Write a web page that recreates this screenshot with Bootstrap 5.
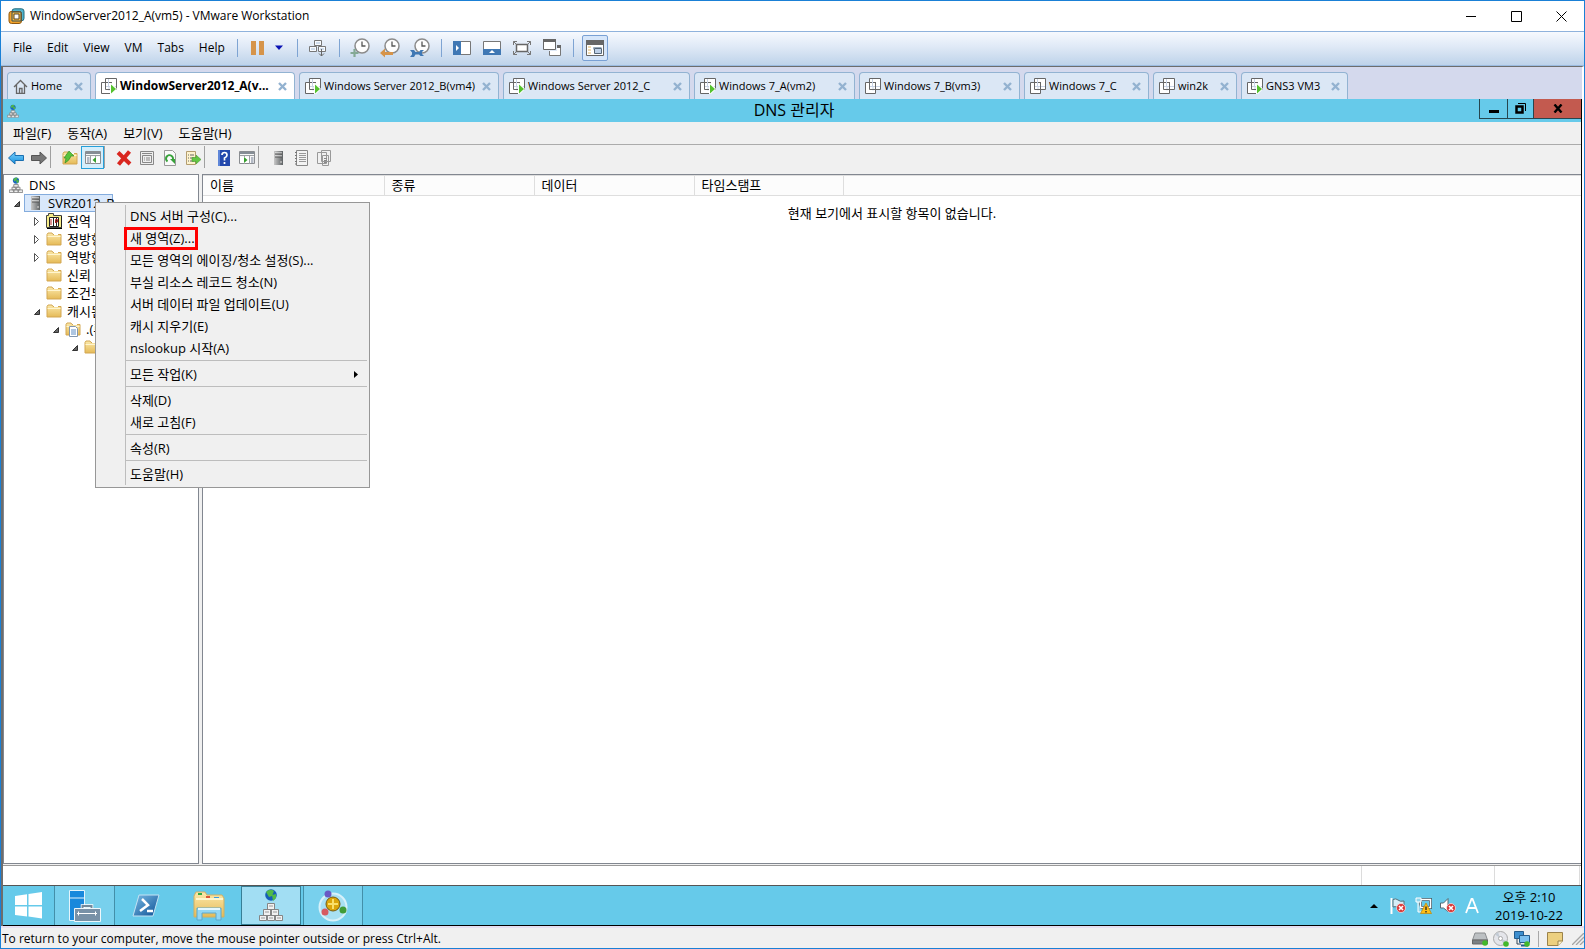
<!DOCTYPE html>
<html lang="ko">
<head>
<meta charset="utf-8">
<meta name="viewport" content="width=device-width, initial-scale=1">
<title>WindowServer2012_A(vm5) - VMware Workstation</title>
<link href="https://cdn.jsdelivr.net/npm/bootstrap@5.3.0/dist/css/bootstrap.min.css" rel="stylesheet">
<style>
body{font-family:"Open Sans","Noto Sans CJK KR",sans-serif;font-size:12px;line-height:18px;color:#000;background:#f0f0f0}
button{background:none;border:0;padding:0;color:inherit;font:inherit;display:flex;align-items:center;justify-content:center}
svg{display:block;flex:none}
.frame{height:100vh;border:1px solid #1a80d6}
.host-title{height:30px;background:#fff}
.host-title .app-icon{margin:0 5px 0 7px}
.host-title button{width:45px;height:28px}
.host-bar{height:35px;border-top:1px solid #8fb2dc;border-bottom:1px solid #9bbbe0;background:linear-gradient(#f6f9fe,#dfe9f6 45%,#bed3ea);padding:0 0 2px 5px}
.host-bar .menu-btn{padding:0 8px 0 7px;height:24px}
.host-bar .tool{width:30px;height:26px}
.host-bar .drop{width:12px;height:26px;margin-right:6px}
.host-bar .first{margin-left:5px}
.host-bar .vsep{width:1px;height:18px;background:#7ea4d3;margin-left:6px}
.host-bar .pressed{width:26px;border:1px solid #79a0d4;border-radius:2px;background:#d6e6fa;margin-left:8px}
.guest{border:solid #6d6d6d;border-width:1px 0 0 2px;border-right:2px solid #fff}
.tabs{height:32px;background:#d4d9ed;padding:5px 0 0 4px;gap:4px}
.vtab{height:27px;border:1px solid #92b3d2;border-bottom:0;border-radius:4px 4px 0 0;background:#dbe7f5;padding:0 4px 0 5px;font-size:11px;gap:3px;white-space:nowrap}
.vtab.on{background:#fff;font-weight:700;font-size:12px}
.vtab button{width:15px;height:18px}
.t-s{width:84px}.t-l{width:200px}.t-ml{width:187px}.t-m{width:161px}.t-ms{width:125px}.t-g{width:107px}
.desk{border-right:1px solid #000;border-bottom:1px solid #000;background:#f0f0f0;font-size:13px}
.mmc-title{height:23px;background:#66caea}
.mmc-title .cap{font-size:16px;line-height:22px}
.mmc-title .caps button{height:20px;border:solid #26464f;border-width:0 0 1px 1px}
.cap-a{width:28px}.cap-b{width:26px}.caps .cap-x{width:48px;background:#c35a4f;border-right-width:1px}
.mmc-menu{height:23px;border-bottom:1px solid #ababab;padding:0 2px}
.mmc-menu button{padding:0 8px;height:22px}
.mmc-tools{height:29px;padding:1px 0 0 1px}
.mmc-tools button{width:23px;height:23px}
.mmc-tools .pressed{border:1px solid #26a0da;background:#d5eefb}
.mmc-tools .gsep{width:8px;height:22px;border-left:1px solid #a0a0a0}
.panes{gap:3px}
.tree{width:196px;border:1px solid #828790;background:#fff;padding-top:1px}
.tree .node{height:18px;gap:5px;white-space:nowrap}
.tree .lv1{padding-left:8px}.tree .lv2{padding-left:28px}.tree .lv3{padding-left:47px}.tree .lv4{padding-left:66px}
.tree .twist{width:9px;height:9px}
.node .pick{height:18px;width:89px;margin-left:-2px;border:1px solid #84acdd;background:#d9e8fb;gap:6px;padding-left:3px}
.ctx{position:absolute;left:91px;top:8px;z-index:5;width:275px;padding:2px;border:1px solid #979797;background:#f0f0f0}
.ctx .items{margin-left:27px;border-left:1px solid #bdbdbd}
.ctx button{width:100%;height:22px;justify-content:flex-start;padding-left:4px;position:relative}
.ctx hr{height:1px;margin:1px 0 2px;border:0;background:#bdbdbd;opacity:1}
.ctx .ring{position:absolute;left:-2px;top:0;width:74px;height:23px;border:3px solid #f00}
.ctx .sub{margin:0 9px 0 auto}
.list{border:1px solid #828790;border-right:0;background:#fff}
.list table{table-layout:fixed;width:100%}
.list th{height:20px;font-weight:400;background:#fcfcfc;border:solid #dedede;border-width:1px 1px 1px 0;padding:0 0 0 7px;line-height:17px}
.list th:last-child{border-right:0}
.list td{text-align:center;padding-top:8px}
.c1{width:181px}.c2{width:150px}.c3{width:160px}.c4{width:149px}
.mmc-status{height:21px;margin-top:1px;border-top:1px solid #999;border-bottom:1px solid #555;background:#fff}
.mmc-status span{border-left:1px solid #dcdcdc}
.s1{width:133px}.s2{width:85px}.s3{width:2px}
.taskbar{height:39px;background:#66caea}
.taskbar .task{width:60px;height:39px;border-right:1px solid #438fa9}
.taskbar .start{width:52px}
.taskbar .run{background:#78d0ed}
.taskbar .act{background:#a2def3;border:1px solid #377f96;margin-right:2px}
.taskbar .run2{border-left:1px solid #438fa9}
.taskbar .quiet{border-color:transparent;width:63px}
.tray{gap:8px;padding-right:17px}
.clock{width:70px;margin-left:7px;text-align:center;line-height:18px}
.host-status{height:22px;border-top:2px solid #e6dff0;padding:1px 0 0 1px}
.host-status .marks{gap:5px}
.host-status .vsep{width:1px;height:16px;background:#a8a8a8;margin:0 3px}
</style>
</head>
<body>
<svg width="0" height="0" class="position-absolute">
<defs>
<linearGradient id="gf" x2="0" y2="1"><stop stop-color="#fbe9ab"/><stop offset="1" stop-color="#e5ba57"/></linearGradient>
<linearGradient id="gb" x2="0" y2="1"><stop stop-color="#7bd0fb"/><stop offset="1" stop-color="#1590de"/></linearGradient>
<linearGradient id="gp" x2="1" y2="1"><stop stop-color="#7bbce6"/><stop offset="1" stop-color="#0b4f94"/></linearGradient>
<linearGradient id="gs" x2="1" y2="0"><stop stop-color="#c8c8c8"/><stop offset="1" stop-color="#5e6264"/></linearGradient>
<symbol id="vm" viewBox="0 0 16 16"><path d="M4.500 .5h11v11h-11z" fill="#fff" stroke="#666"/><path d="M.5 4.500h10v11H.5z" fill="#fff" stroke="#666"/><path d="M7.500 1v7.500H15M4 8.500h4v4" fill="none" stroke="#c9d4e6"/><path d="M4.500 4v7.500H10M10.500 4v8" fill="none" stroke="#666"/></symbol>
<symbol id="vmrun" viewBox="0 0 16 16"><use href="#vm" width="16" height="16"/><path d="M9 5.500v10.500h2l5-5-5-6z" fill="#fff"/><path d="M10 6.500v9l5-4.500z" fill="#56c22f"/></symbol>
<symbol id="tx" viewBox="0 0 9 9"><path d="M1 1l7 7M8 1l-7 7" stroke="#93b2d0" stroke-width="2.400"/></symbol>
<symbol id="fold" viewBox="0 0 16 16"><path d="M1 3.500L2 2h4l1 1.500h8V14H1z" fill="url(#gf)" stroke="#d3a752"/><path d="M1.500 5.500h13" stroke="#fff5cf"/><path d="M8 3.500h4" stroke="#fff"/></symbol>
<symbol id="closed" viewBox="0 0 9 9"><path d="M2.500 .5v8l4-4z" fill="#fff" stroke="#555"/></symbol>
<symbol id="open" viewBox="0 0 9 9"><path d="M7.500 2.500v5h-5z" fill="#666" stroke="#333"/></symbol>
<symbol id="srv" viewBox="0 0 16 16"><path d="M4 1h9v14H4z" fill="url(#gs)"/><path d="M5 3h7M5 6h7" stroke="#f4f4f4"/><path d="M5 4h7M5 7h7" stroke="#555"/><path d="M10 11h2v2h-2z" fill="#aaa"/></symbol>
<symbol id="dns" viewBox="0 0 16 18"><circle cx="8" cy="4" r="3.500" fill="#1b65c2"/><path d="M5 2.500Q8-.5 10 1.500L8 4 6 5zM8 4l3-1v3L9 7z" fill="#51b848"/><g fill="#eee" stroke="#858585"><path d="M5.500 8.500h5v3h-5zM3.500 11.500h4v3h-4zM8.500 11.500h4v3h-4zM.5 14.500h5v3h-5zM5.500 14.500h5v3h-5zM10.500 14.500h5v3h-5z"/></g></symbol>
<symbol id="clk" viewBox="0 0 20 20"><circle cx="12" cy="8" r="7" fill="#fdfdfd" stroke="#8b8b8b" stroke-width="1.500"/><path d="M12 3.500V8h3.500" fill="none" stroke="#555" stroke-width="1.300"/></symbol>
<symbol id="err" viewBox="0 0 10 10"><circle cx="5" cy="5" r="4.500" fill="#d93636" stroke="#fff" stroke-width=".6"/><path d="M3 3l4 4M7 3l-4 4" stroke="#fff" stroke-width="1.600"/></symbol>
<symbol id="win" viewBox="0 0 16 16"><path d="M.5 1.500h15v12H.5z" fill="#f8f8f8" stroke="#8a8d91"/><path d="M1 2h14v2H1z" fill="#858d95"/><path d="M1 5.500h14M5.500 6v8M10.500 6v8" stroke="#9b9fa3"/><path d="M2 8h2.500M2 10h2.500M2 12h2.500M12 8h2.500M12 10h2.500M12 12h2.500" stroke="#717c92"/></symbol>
</defs>
</svg>

<div class="frame d-flex flex-column overflow-hidden">
  <header class="host-title d-flex align-items-center flex-shrink-0">
    <svg class="app-icon" width="17" height="17" viewBox="0 0 17 17"><rect x="4" y=".8" width="12" height="12" rx="2.500" fill="#4fb3cd" stroke="#236b7d"/><path d="M3 3.500h8.500q2 0 2 2V13q0 2.500-2.500 2.500H3.500Q1 15.500 1 13V6q0-2.500 2-2.500z" fill="#f2a229" stroke="#91590f"/><path d="M4 4h9v9H4z" fill="#f7bb45" stroke="#35515b"/><path d="M6 6h5v5H6z" fill="#fff" stroke="#554525"/></svg>
    <span class="me-auto text-nowrap">WindowServer2012_A(vm5) - VMware Workstation</span>
    <button aria-label="Minimize"><svg width="11" height="11"><path d="M0 5.500h10" stroke="#000"/></svg></button>
    <button aria-label="Maximize"><svg width="11" height="11"><path d="M.5 .5h10v10h-10z" fill="none" stroke="#000"/></svg></button>
    <button aria-label="Close"><svg width="11" height="11"><path d="M.5 .5l10 10M10.500 .5l-10 10" stroke="#000"/></svg></button>
  </header>

  <nav class="host-bar d-flex align-items-center flex-shrink-0">
    <button class="menu-btn">File</button><button class="menu-btn">Edit</button><button class="menu-btn">View</button><button class="menu-btn">VM</button><button class="menu-btn">Tabs</button><button class="menu-btn">Help</button>
    <span class="vsep ms-1"></span>
    <button class="tool first" aria-label="Suspend"><svg width="13" height="14"><path d="M0 0h5v14H0zM8 0h5v14H8z" fill="#d6944a"/></svg></button>
    <button class="drop" aria-label="Power options"><svg width="8" height="5"><path d="M0 .5h8L4 5z" fill="#0a12b4"/></svg></button>
    <span class="vsep"></span>
    <button class="tool first" aria-label="Send Ctrl+Alt+Del"><svg width="18" height="18" viewBox="0 0 18 18"><g fill="#f8fbff" stroke="#777"><path d="M5.500 1.500h7v5h-7zM.5 7.500h7v5h-7zM9.500 7.500h7v5h-7z"/></g><path d="M7 4h4M2 10h4M11 10h4" stroke="#a7bfdc"/><path d="M12.500 10v7M10 14.500l2.500 2.500 2.500-2.500" fill="none" stroke="#666"/></svg></button>
    <span class="vsep"></span>
    <button class="tool first" aria-label="Take snapshot"><svg width="20" height="20"><use href="#clk" width="20" height="20"/><path d="M4.500 11v8M.5 15h8" stroke="#84a995" stroke-width="2.200"/></svg></button>
    <button class="tool" aria-label="Revert snapshot"><svg width="20" height="20"><use href="#clk" width="20" height="20"/><path d="M0 15l5-4.500V14h8v3H5v2.500z" fill="#d6944a"/></svg></button>
    <button class="tool" aria-label="Manage snapshots"><svg width="20" height="20"><use href="#clk" width="20" height="20"/><path d="M0 12h4l1.500 2H9l1.500-2h3.500l-2 2v2l2 2h-3.500L9 16.500H5.500L4 19H0l2-2.500v-2z" fill="#4078b4"/></svg></button>
    <span class="vsep"></span>
    <button class="tool first" aria-label="Library"><svg width="18" height="14"><path d="M.5 .5h17v13H.5z" fill="#fff" stroke="#777"/><path d="M0 0h8v14H0z" fill="#4078b4"/><path d="M3 4l3 3-3 3z" fill="#fff"/></svg></button>
    <button class="tool" aria-label="Thumbnail bar"><svg width="18" height="14"><path d="M.5 .5h17v13H.5z" fill="#fff" stroke="#777"/><path d="M0 8h18v6H0z" fill="#4078b4"/><path d="M6 12l3-3 3 3z" fill="#fff"/></svg></button>
    <button class="tool" aria-label="Full screen"><svg width="18" height="14"><path d="M3.500 3.500h11v7h-11z" fill="#fff" stroke="#666" stroke-width="1.500"/><path d="M.5 4V.5H4M14 .5h3.500V4M.5 10v3.500H4M14 13.500h3.500V10M.5 .5l3 3M17.500 .5l-3 3M.5 13.500l3-3M17.500 13.500l-3-3" fill="none" stroke="#777"/></svg></button>
    <button class="tool" aria-label="Unity"><svg width="18" height="18"><path d="M6.500 7.500h11v9h-11z" fill="#fff" stroke="#777"/><path d="M6 6h8v6H6z" fill="#dfe9f6"/><path d="M.5 .5h12v10H.5z" fill="#fff" stroke="#666"/><path d="M0 0h13v3H0zM14 6h4v3h-4z" fill="#666"/></svg></button>
    <span class="vsep"></span>
    <button class="tool pressed" aria-label="Console view"><svg width="18" height="16"><path d="M.5 .5h17v15H.5z" fill="#fff" stroke="#666"/><path d="M0 0h18v5H0z" fill="#666"/><path d="M2 7h3M2 10h3M2 13h3" stroke="#e2b660"/><path d="M7.500 9.500v-2h8" fill="none" stroke="#9ab"/><path d="M8.500 8.500h7v5h-7z" fill="#bdd0e8" stroke="#567"/></svg></button>
  </nav>

  <main class="guest d-flex flex-column flex-grow-1">
    <div class="tabs d-flex flex-shrink-0">
      <div class="vtab t-s d-flex align-items-center"><svg width="15" height="15"><path d="M1 8l6.500-6.500L14 8M3.500 6v8.500h8V6M6.500 14V9.500h2.500V14" fill="none" stroke="#666" stroke-width="1.300"/></svg><span class="me-auto">Home</span><button aria-label="Close tab"><svg width="9" height="9"><use href="#tx"/></svg></button></div>
      <div class="vtab on t-l d-flex align-items-center"><svg width="16" height="16"><use href="#vmrun"/></svg><span class="me-auto">WindowServer2012_A(v...</span><button aria-label="Close tab"><svg width="9" height="9"><use href="#tx"/></svg></button></div>
      <div class="vtab t-l d-flex align-items-center"><svg width="16" height="16"><use href="#vmrun"/></svg><span class="me-auto">Windows Server 2012_B(vm4)</span><button aria-label="Close tab"><svg width="9" height="9"><use href="#tx"/></svg></button></div>
      <div class="vtab t-ml d-flex align-items-center"><svg width="16" height="16"><use href="#vmrun"/></svg><span class="me-auto">Windows Server 2012_C</span><button aria-label="Close tab"><svg width="9" height="9"><use href="#tx"/></svg></button></div>
      <div class="vtab t-m d-flex align-items-center"><svg width="16" height="16"><use href="#vmrun"/></svg><span class="me-auto">Windows 7_A(vm2)</span><button aria-label="Close tab"><svg width="9" height="9"><use href="#tx"/></svg></button></div>
      <div class="vtab t-m d-flex align-items-center"><svg width="16" height="16"><use href="#vm"/></svg><span class="me-auto">Windows 7_B(vm3)</span><button aria-label="Close tab"><svg width="9" height="9"><use href="#tx"/></svg></button></div>
      <div class="vtab t-ms d-flex align-items-center"><svg width="16" height="16"><use href="#vm"/></svg><span class="me-auto">Windows 7_C</span><button aria-label="Close tab"><svg width="9" height="9"><use href="#tx"/></svg></button></div>
      <div class="vtab t-s d-flex align-items-center"><svg width="16" height="16"><use href="#vm"/></svg><span class="me-auto">win2k</span><button aria-label="Close tab"><svg width="9" height="9"><use href="#tx"/></svg></button></div>
      <div class="vtab t-g d-flex align-items-center"><svg width="16" height="16"><use href="#vmrun"/></svg><span class="me-auto">GNS3 VM3</span><button aria-label="Close tab"><svg width="9" height="9"><use href="#tx"/></svg></button></div>
    </div>

    <section class="desk d-flex flex-column flex-grow-1">
      <div class="mmc-title d-flex flex-shrink-0">
        <div class="col d-flex align-items-center ps-1"><svg width="12" height="16" viewBox="0 0 16 18"><use href="#dns" width="16" height="18"/></svg></div>
        <div class="cap">DNS 관리자</div>
        <div class="col d-flex justify-content-end caps">
          <button class="cap-a" aria-label="Minimize"><svg width="10" height="9"><path d="M0 6h10v3H0z"/></svg></button>
          <button class="cap-b" aria-label="Restore"><svg width="11" height="11"><path d="M1.500 3.500h6v6h-6z" fill="none" stroke="#000" stroke-width="2.500"/><path d="M3 .5h7.500V8" fill="none" stroke="#000"/></svg></button>
          <button class="cap-x" aria-label="Close"><svg width="10" height="9"><path d="M1.500 .5l7 8M8.500 .5l-7 8" stroke="#000" stroke-width="2.400"/></svg></button>
        </div>
      </div>
      <nav class="mmc-menu d-flex flex-shrink-0"><button>파일(F)</button><button>동작(A)</button><button>보기(V)</button><button>도움말(H)</button></nav>
      <div class="mmc-tools d-flex flex-shrink-0">
        <button aria-label="Back"><svg width="16" height="16"><path d="M.5 8l6.500-6V5.500h8.500v5H7V14z" fill="url(#gb)" stroke="#1a6fb0"/></svg></button>
        <button aria-label="Forward"><svg width="16" height="16"><path d="M15.500 8L9 2v3.500H.5v5H9V14z" fill="#777" stroke="#555"/></svg></button>
        <span class="gsep"></span>
        <button aria-label="Up"><svg width="16" height="16"><use href="#fold" width="16" height="16"/><path d="M3 13l1-5H2l5-7 5 5H9Q8 10 3 13z" fill="#58c33b" stroke="#398d26" stroke-width=".7"/></svg></button>
        <button class="pressed" aria-label="Show tree"><svg width="16" height="16"><use href="#win"/><path d="M6 7h9v6H6z" fill="#fff"/><path d="M11 7v6L7.500 10z" fill="#369e2e"/></svg></button>
        <span class="gsep"></span>
        <button aria-label="Delete"><svg width="16" height="16"><path d="M2 2.500l12 11.500M13.500 1.500L2.500 14.500" stroke="#d9261f" stroke-width="4"/></svg></button>
        <button aria-label="Properties"><svg width="16" height="16"><path d="M1.500 1.500h13v13h-13z" fill="#eee" stroke="#888"/><path d="M3 3.500h10M3.500 5.500h9v7h-9zM5 8h1M7 8h4M5 10h1M7 10h4" fill="none" stroke="#888"/></svg></button>
        <button aria-label="Refresh"><svg width="16" height="16"><path d="M2.500 .5h8l3 3v12h-11z" fill="#fafafa" stroke="#999"/><path d="M5.500 11.500a3.500 3.500 0 1 1 5-1" fill="none" stroke="#38a23a" stroke-width="2"/><path d="M8 9h5v5z" fill="#38a23a"/></svg></button>
        <button aria-label="Export"><svg width="16" height="16"><path d="M1.500 1.500h9v13h-9z" fill="#fdf2cd" stroke="#b49d6f"/><path d="M3 5h1M5 5h4M3 8h1M5 8h4M3 11h1M5 11h4" stroke="#666"/><path d="M7 7.500h4V5l5 4.500-5 4.500v-2.500H7z" fill="#63c744" stroke="#4b9934" stroke-width=".6"/></svg></button>
        <span class="gsep"></span>
        <button aria-label="Help"><svg width="16" height="16"><path d="M2 0h12v16H2z" fill="#2449ad"/><path d="M2 0h2v16H2z" fill="#5f86d8"/><path d="M6 5Q6 2.500 8.500 2.500T11 5Q11 7 8.500 8v2.500M8.500 12v2" fill="none" stroke="#fff" stroke-width="1.700"/></svg></button>
        <button aria-label="Show actions"><svg width="16" height="16"><use href="#win"/><path d="M1 7h9v6H1z" fill="#fff"/><path d="M5 7v6l3.500-3z" fill="#369e2e"/></svg></button>
        <span class="gsep"></span>
        <button aria-label="New server"><svg width="16" height="16"><use href="#srv"/></svg></button>
        <button aria-label="Event log"><svg width="16" height="16"><path d="M3.500 .5h11v15h-11z" fill="#f3f3f3" stroke="#888"/><path d="M6 3.500h7M6 5.500h7M6 7.500h7M6 9.500h7M6 11.500h7" stroke="#999"/><path d="M2 2.500h2M2 5.500h2M2 8.500h2M2 11.500h2M2 14h2" stroke="#777"/></svg></button>
        <button aria-label="New records"><svg width="16" height="16"><g fill="#f1f1f1" stroke="#999"><path d="M5.500 .5h9v11h-9zM1.500 2.500h9v11h-9zM6.500 5.500h6v10h-6z"/></g><path d="M8 8.500h3M8 10.500h3M8 12.500h3" stroke="#888"/></svg></button>
      </div>

      <div class="panes d-flex flex-grow-1">
        <div class="tree flex-shrink-0">
          <div class="node d-flex align-items-center ps-1"><svg width="16" height="16" viewBox="0 0 16 18"><use href="#dns" width="16" height="18"/></svg><span>DNS</span></div>
          <div class="node lv1 d-flex align-items-center position-relative"><svg class="twist"><use href="#open"/></svg>
            <div class="pick d-flex align-items-center"><svg width="14" height="16" viewBox="1 0 14 16"><use href="#srv" width="16" height="16"/></svg><span>SVR2012_B</span></div>
            <div class="ctx" role="menu"><div class="items">
              <button>DNS 서버 구성(C)...</button>
              <button>새 영역(Z)...<span class="ring"></span></button>
              <button>모든 영역의 에이징/청소 설정(S)...</button>
              <button>부실 리소스 레코드 청소(N)</button>
              <button>서버 데이터 파일 업데이트(U)</button>
              <button>캐시 지우기(E)</button>
              <button>nslookup 시작(A)</button>
              <hr>
              <button>모든 작업(K)<svg class="sub" width="4" height="7"><path d="M0 0l4 3.500L0 7z"/></svg></button>
              <hr>
              <button>삭제(D)</button>
              <button>새로 고침(F)</button>
              <hr>
              <button>속성(R)</button>
              <hr>
              <button>도움말(H)</button>
            </div></div>
          </div>
          <div class="node lv2 d-flex align-items-center"><svg class="twist"><use href="#closed"/></svg><svg width="16" height="16"><path d="M.5 2.500h2v-2h5v2h8v12H.5z" fill="#f7ed89" stroke="#444"/><path d="M1 15.500h15V3" fill="none" stroke="#000"/><path d="M3.500 4.500h7v9h-7zM7.500 4.500h5v9h-5z" fill="#fff" stroke="#222"/><path d="M5 6v6M9.500 10V6.500h2V9h-2" fill="none" stroke="#b32323"/></svg><span>전역</span></div>
          <div class="node lv2 d-flex align-items-center"><svg class="twist"><use href="#closed"/></svg><svg width="16" height="16"><use href="#fold"/></svg><span>정방향</span></div>
          <div class="node lv2 d-flex align-items-center"><svg class="twist"><use href="#closed"/></svg><svg width="16" height="16"><use href="#fold"/></svg><span>역방향</span></div>
          <div class="node lv2 d-flex align-items-center"><span class="twist"></span><svg width="16" height="16"><use href="#fold"/></svg><span>신뢰</span></div>
          <div class="node lv2 d-flex align-items-center"><span class="twist"></span><svg width="16" height="16"><use href="#fold"/></svg><span>조건부</span></div>
          <div class="node lv2 d-flex align-items-center"><svg class="twist"><use href="#open"/></svg><svg width="16" height="16"><use href="#fold"/></svg><span>캐시된</span></div>
          <div class="node lv3 d-flex align-items-center"><svg class="twist"><use href="#open"/></svg><svg width="16" height="16"><use href="#fold" width="16" height="16"/><path d="M4.500 5.500h6l2 2v8h-8z" fill="#fff" stroke="#8196ae"/><path d="M6 9h5M6 11h5M6 13h5" stroke="#5d8cc2"/></svg><span>.(루</span></div>
          <div class="node lv4 d-flex align-items-center"><svg class="twist"><use href="#open"/></svg><svg width="16" height="16"><use href="#fold"/></svg></div>
        </div>
        <div class="list flex-grow-1">
          <table>
            <thead><tr><th class="c1">이름</th><th class="c2">종류</th><th class="c3">데이터</th><th class="c4">타임스탬프</th><th aria-label="빈 열"></th></tr></thead>
            <tbody><tr><td colspan="5">현재 보기에서 표시할 항목이 없습니다.</td></tr></tbody>
          </table>
        </div>
      </div>
      <div class="mmc-status d-flex justify-content-end flex-shrink-0"><span class="s1"></span><span class="s2"></span><span class="s3"></span></div>

      <footer class="taskbar d-flex flex-shrink-0">
        <button class="task start" aria-label="Start"><svg width="28" height="27"><path d="M0 4l12-1.700V13H0zM13.500 2L27 0v13H13.500zM0 14.500h12v10L0 23zM13.500 14.500H27V26.500l-13.500-2z" fill="#fff"/></svg></button>
        <button class="task run" aria-label="Server Manager"><svg width="32" height="32"><path d="M.5 .5h15v30H.5z" fill="#1888dc" stroke="#e4f4fc"/><path d="M1 8h15" stroke="#e4f4fc"/><path d="M13.500 19v-3h9v3" fill="none" stroke="#fff" stroke-width="3.500"/><path d="M13.500 19v-3h9v3" fill="none" stroke="#71899c" stroke-width="2"/><path d="M5.500 18.500h26v13h-26z" fill="#7891a7" stroke="#eef7fb"/><path d="M8 23.500h20M9.500 21.500v4M26.500 21.500v4" stroke="#fff"/></svg></button>
        <button class="task quiet" aria-label="PowerShell"><svg width="28" height="24"><path d="M7 1h20l-6 21H1z" fill="url(#gp)" stroke="#c3e2f3"/><path d="M10 5l6 6-8 6M15 17h6" fill="none" stroke="#fff" stroke-width="2.500"/></svg></button>
        <button class="task quiet" aria-label="File Explorer"><svg width="34" height="30"><path d="M2 5l2-4h9l2 3h15l2 3v19H2z" fill="url(#gf)" stroke="#cfb065"/><path d="M6 2h4v2H6z" fill="#31a943"/><path d="M14 5h4v2h-4z" fill="#dc573b"/><path d="M22 6h5v2h-5z" fill="#3d9ce0"/><path d="M4 8h27" stroke="#fff7ce" stroke-width="2"/><path d="M5 29V17h24v12h-5v-7H10v7z" fill="#93d7f5" stroke="#5ca8cc"/><path d="M6 18h22" stroke="#e4f8ff" stroke-width="2"/></svg></button>
        <button class="task act" aria-label="DNS Manager"><svg width="26" height="33" viewBox="0 0 26 33"><circle cx="13" cy="6" r="5.800" fill="#165eb9"/><path d="M8 3Q12-1 16 2l-2 5-3 1zM14 6l4-1v4l-3 3z" fill="#51ba49"/><g fill="#f1f1f1" stroke="#858585"><path d="M9.500 14.500h7v6h-7zM5.500 20.500h7v6h-7zM13.500 20.500h7v6h-7zM1.500 26.500h7v5h-7zM9.500 26.500h7v5h-7zM17.500 26.500h7v5h-7z"/></g><path d="M11 17h4M7 23h4M15 23h4M3 29h4M11 29h4M19 29h4" stroke="#999"/></svg></button>
        <button class="task run run2" aria-label="Component services"><svg width="32" height="32"><circle cx="16" cy="17" r="13.500" fill="#a8e0f3" stroke="#d7f1fa" stroke-width="2"/><circle cx="16" cy="14" r="7" fill="#dba60a" stroke="#745b13"/><path d="M16 9v10M11 14h10" stroke="#fae06a" stroke-width="2"/><circle cx="11" cy="4" r="3.500" fill="#6959c4"/><circle cx="8" cy="22" r="3.500" fill="#d75b62"/><circle cx="26" cy="20" r="3.500" fill="#409c38"/></svg></button>
        <div class="tray d-flex align-items-center ms-auto">
          <button class="me-1" aria-label="Hidden icons"><svg width="8" height="4"><path d="M4 0l4 4H0z"/></svg></button>
          <svg width="17" height="17"><path d="M1.500 1v16" stroke="#fff" stroke-width="2"/><path d="M3 2.500Q6 1 8 3t6 1v7Q11 12 8 10.500T3 10z" fill="#d4eef8" stroke="#55707b"/><use href="#err" x="6" y="6" width="10" height="10"/></svg>
          <svg width="17" height="17"><path d="M5.500 2.500h10v8h-10z" fill="#66caea" stroke="#405963" stroke-width="3"/><path d="M5.500 2.500h10v8h-10zM8 13.500h6" fill="none" stroke="#fff" stroke-width="1.500"/><path d="M1 1h5v4H1zM3 5v10h4" fill="#90d5eb" stroke="#fff"/><path d="M11 6l5.500 10.500h-11z" fill="#ffbf15" stroke="#c18400" stroke-width=".7"/><path d="M11 9.500v3.500M11 14v1.500" stroke="#222" stroke-width="1.300"/></svg>
          <svg width="17" height="17"><path d="M.5 6h3L8 1.500v13L3.500 11h-3z" fill="#fff" stroke="#526b75"/><use href="#err" x="6" y="6" width="10" height="10"/></svg>
          <svg width="14" height="16"><path d="M1 15L6.500 1h1L13 15M3.500 10h7" fill="none" stroke="#fff" stroke-width="1.800"/></svg>
          <div class="clock">오후 2:10<br>2019-10-22</div>
        </div>
      </footer>
    </section>
  </main>

  <footer class="host-status d-flex align-items-center flex-shrink-0">
    <span class="me-auto">To return to your computer, move the mouse pointer outside or press Ctrl+Alt.</span>
    <div class="marks d-flex align-items-center">
      <svg width="16" height="14"><path d="M3 1h10l2.500 7H.5z" fill="#bcc0c3" stroke="#8a8d90"/><path d="M.5 8h15v4H.5z" fill="#7b8083" stroke="#666"/><circle cx="13" cy="11" r="2.800" fill="#43b82b"/></svg>
      <svg width="16" height="16"><circle cx="7.500" cy="7.500" r="7" fill="#e4e5ea" stroke="#aaa"/><path d="M7 7L2 3.500 5 1zM8 8l6 2-3 4z" fill="#c2cbd4"/><circle cx="7.500" cy="7.500" r="2" fill="#fff" stroke="#aaa"/><circle cx="13" cy="13" r="2.800" fill="#43b82b"/></svg>
      <svg width="16" height="16"><path d="M.5 .5h9v7h-9z" fill="#3d8ece" stroke="#245c8c"/><path d="M3 8v5h4" fill="none" stroke="#345"/><path d="M5.500 4.500h10v7h-10z" fill="#7cc0ef" stroke="#245c8c"/><path d="M7 14.500h7" stroke="#245c8c" stroke-width="2"/><circle cx="13" cy="13" r="2.800" fill="#43b82b"/></svg>
      <span class="vsep"></span>
      <svg width="16" height="14"><path d="M.5 .5h15V9l-4.500 4.500H.5z" fill="#ecd080" stroke="#9b834b"/><path d="M11 13.500V9h4.500" fill="#fff3c6" stroke="#9b834b"/></svg>
      <svg class="ms-1" width="12" height="12"><path d="M0 12L12 0M4 12l8-8M8 12l4-4" stroke="#a5a5a5" stroke-width="1.300"/></svg>
    </div>
  </footer>
</div>
<script src="https://cdn.jsdelivr.net/npm/bootstrap@5.3.0/dist/js/bootstrap.bundle.min.js"></script>
</body>
</html>
